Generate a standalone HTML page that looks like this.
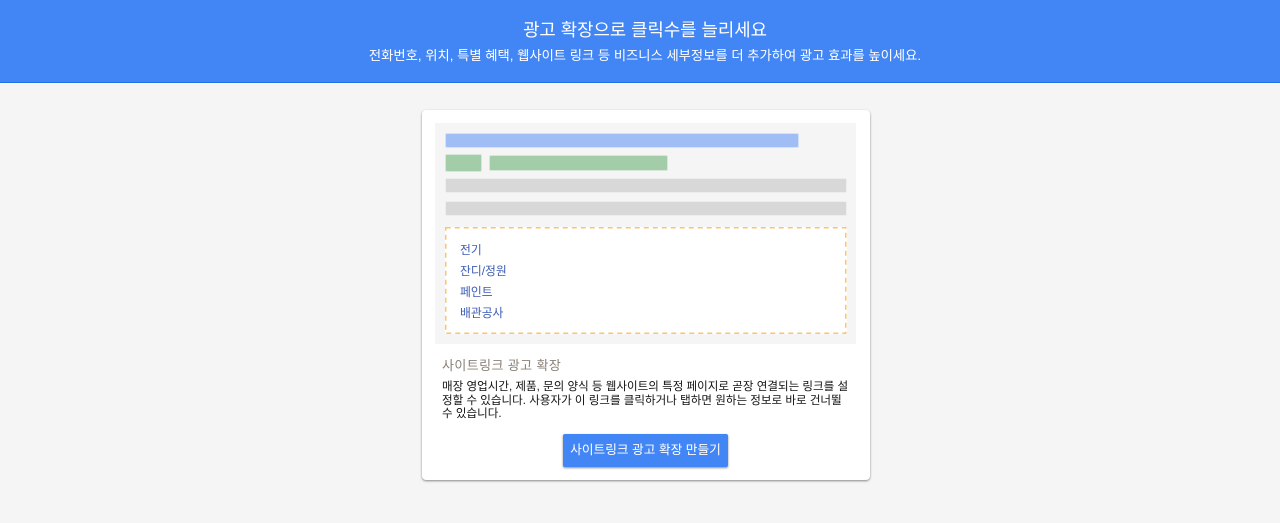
<!DOCTYPE html>
<html lang="ko"><head><meta charset="utf-8"><title>사이트링크 광고 확장</title>
<style>
*{box-sizing:border-box}
html,body{margin:0;padding:0;width:1280px;height:523px;overflow:hidden;background:#f5f5f5;font-family:"Liberation Sans","WenQuanYi Zen Hei","Noto Sans CJK KR",sans-serif}
.a{position:absolute;white-space:nowrap}
.b{position:absolute;border-radius:2px;border:1px solid rgba(255,255,255,.55)}
.l{position:absolute;left:460px;font-size:11.8px;line-height:14px;color:#3b5bb5;white-space:nowrap}
</style></head><body>
<div class="a" style="left:0;top:0;width:1280px;height:83px;background:#4285f4;border-bottom:1px solid #1a73e8"></div>
<div class="a" style="left:0;top:83px;width:1280px;height:1px;background:#fff"></div>
<div class="a" style="left:5px;width:1280px;top:20px;text-align:center;font-size:17.8px;line-height:20px;color:#fff">광고 확장으로 클릭수를 늘리세요</div>
<div class="a" style="left:5px;width:1280px;top:48px;text-align:center;font-size:13.3px;line-height:16px;color:#fff">전화번호, 위치, 특별 혜택, 웹사이트 링크 등 비즈니스 세부정보를 더 추가하여 광고 효과를 높이세요.</div>

<div class="a" style="left:422px;top:110px;width:448px;height:370px;background:#fff;border-radius:4px;box-shadow:0 1px 2px rgba(0,0,0,.45)"></div>
<div class="a" style="left:435px;top:123px;width:421px;height:221px;background:#f5f5f5"></div>
<div class="b" style="left:445px;top:133px;width:354px;height:15px;background:#a1bdf6"></div>
<div class="b" style="left:445px;top:154px;width:37px;height:18px;background:#a3cda9"></div>
<div class="b" style="left:489px;top:155px;width:179px;height:16px;background:#a3cda9"></div>
<div class="b" style="left:445px;top:178px;width:402px;height:15px;background:#d8d8d8"></div>
<div class="b" style="left:445px;top:201px;width:402px;height:15px;background:#d8d8d8"></div>
<svg class="a" style="left:445px;top:227px" width="402" height="107" viewBox="0 0 402 107"><rect x="0" y="0" width="402" height="107" fill="#fff"/><rect x=".75" y=".75" width="400" height="105.5" fill="none" stroke="#fcc46c" stroke-width="1.5" stroke-dasharray="5 4"/></svg>
<div class="l" style="top:243px">전기</div>
<div class="l" style="top:264px">잔디/정원</div>
<div class="l" style="top:285px">페인트</div>
<div class="l" style="top:306px">배관공사</div>
<div class="a" style="left:442px;top:358px;font-size:13px;line-height:15px;letter-spacing:.4px;color:#8a8178">사이트링크 광고 확장</div>
<div class="a" style="left:442px;top:381px;font-size:11.55px;line-height:13.5px;color:#111">매장 영업시간, 제품, 문의 양식 등 웹사이트의 특정 페이지로 곧장 연결되는 링크를 설<br>정할 수 있습니다. 사용자가 이 링크를 클릭하거나 탭하면 원하는 정보로 바로 건너뛸<br>수 있습니다.</div>
<div class="a" style="left:563px;top:434px;width:165px;height:33px;background:#4285f4;border-radius:2px;box-shadow:0 1px 2px rgba(0,0,0,.45);color:#fff;font-size:12.7px;line-height:33px;text-align:center">사이트링크 광고 확장 만들기</div>
</body></html>
